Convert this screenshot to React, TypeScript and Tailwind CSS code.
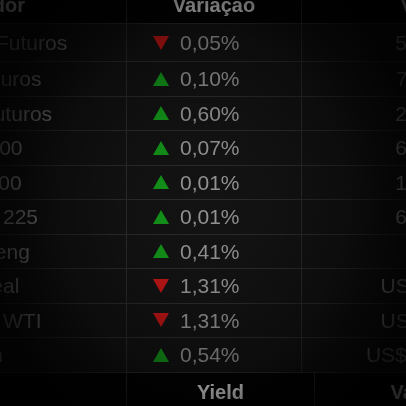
import type { ReactNode } from 'react';

type Row = {
  name: string;
  up: boolean;
  pct: string;
  value: string;
};

const rows: Row[] = [
  { name: 'Dólar Futuros', up: false, pct: '0,05%', value: '5.452,50' },
  { name: 'Taxa Juros', up: true, pct: '0,10%', value: '7.118,25' },
  { name: 'Índ. Futuros', up: true, pct: '0,60%', value: '2.875,00' },
  { name: 'S&P 500', up: true, pct: '0,07%', value: '6.012,75' },
  { name: 'IBrX 100', up: true, pct: '0,01%', value: '1.907,50' },
  { name: 'Nikkei 225', up: true, pct: '0,01%', value: '6.389,00' },
  { name: 'HSI Seng', up: true, pct: '0,41%', value: '2.345' },
  { name: 'Boi Real', up: false, pct: '1,31%', value: 'US$ 3,1250' },
  { name: 'Crude WTI', up: false, pct: '1,31%', value: 'US$ 71,340' },
  { name: 'Bitcoin', up: true, pct: '0,54%', value: 'US$ 91.450,00' },
];

function Arrow({ up }: { up: boolean }) {
  return up ? (
    <svg width="16" height="14" viewBox="0 0 16 14" className="shrink-0">
      <polygon points="8,0 16,14 0,14" fill="#14961a" />
    </svg>
  ) : (
    <svg width="16" height="14" viewBox="0 0 16 14" className="shrink-0">
      <polygon points="0,0 16,0 8,14" fill="#c01616" />
    </svg>
  );
}

function HeadCell({ children, last }: { children?: ReactNode; last?: boolean }) {
  return (
    <div
      className={`flex items-center justify-center text-[20px] font-bold text-white whitespace-nowrap ${
        last ? '' : 'border-r border-[#2c2c2c]'
      }`}
    >
      {children}
    </div>
  );
}

export default function App() {
  return (
    <div className="relative w-[406px] h-[406px] overflow-hidden bg-black font-['Liberation_Sans',Arial,sans-serif]">
      <div className="-mt-[14px] -ml-[70px] w-[640px] blur-[0.5px]">
        {/* cabeçalho */}
        <div className="grid grid-cols-[197px_175px_268px] h-[38px] bg-[#030303] border-b border-[#2c2c2c]">
          <div className="flex items-center pl-[5px] text-[20px] font-bold text-white border-r border-[#2c2c2c]">
            Indicador
          </div>
          <HeadCell>Variação</HeadCell>
          <HeadCell last>Volume</HeadCell>
        </div>

        {rows.map((r, i) => (
          <div
            key={r.name}
            className={`grid grid-cols-[197px_175px_268px] bg-[#131313] border-b border-[#2c2c2c] text-[21px] text-[#959595] ${
              i === 0 ? 'h-[38px]' : 'h-[34.5px]'
            }`}
          >
            <div className="flex items-center pl-[10px] whitespace-nowrap border-r border-[#2c2c2c]">
              {r.name}
            </div>
            <div className="flex items-center gap-[11px] pl-[26px] border-r border-[#2c2c2c]">
              <Arrow up={r.up} />
              <span>{r.pct}</span>
            </div>
            <div className="flex items-center justify-center whitespace-nowrap">{r.value}</div>
          </div>
        ))}

        {/* próxima tabela */}
        <div className="grid grid-cols-[197px_188px_200px] h-[38px] bg-[#030303]">
          <HeadCell />
          <HeadCell>Yield</HeadCell>
          <HeadCell last>Valor</HeadCell>
        </div>
      </div>

      <div className="pointer-events-none absolute inset-0 bg-[radial-gradient(ellipse_220px_260px_at_50%_50%,rgba(0,0,0,0)_0%,rgba(0,0,0,0.1)_35%,rgba(0,0,0,0.35)_65%,rgba(0,0,0,0.6)_80%,rgba(0,0,0,0.85)_100%)]" />
    </div>
  );
}
